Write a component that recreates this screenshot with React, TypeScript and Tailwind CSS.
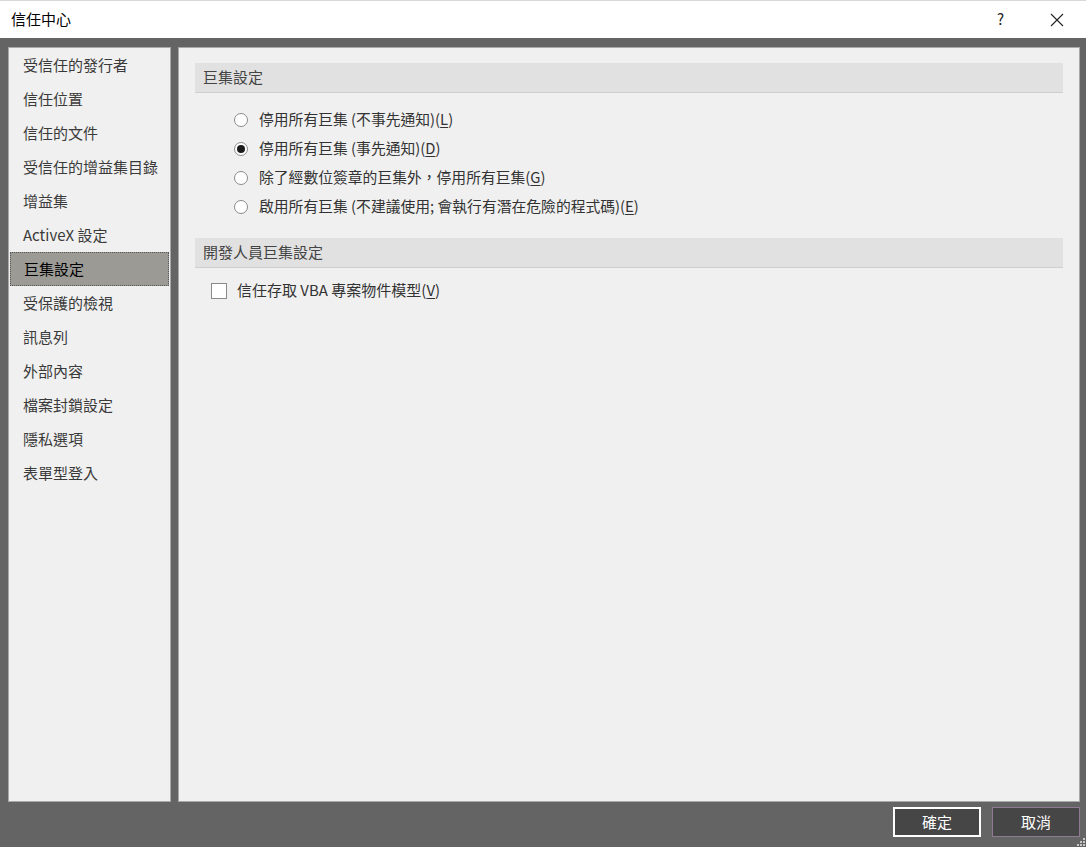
import React from "react";

const font = { fontFamily: '"Noto Sans CJK TC", "Noto Sans", sans-serif' };

const items = [
  "受信任的發行者",
  "信任位置",
  "信任的文件",
  "受信任的增益集目錄",
  "增益集",
  "ActiveX 設定",
  "巨集設定",
  "受保護的檢視",
  "訊息列",
  "外部內容",
  "檔案封鎖設定",
  "隱私選項",
  "表單型登入",
];

function Radio({ checked }: { checked?: boolean }) {
  return (
    <span className="w-[14px] h-[14px] rounded-full border border-[#8a8a8a] bg-white flex items-center justify-center shrink-0">
      {checked && <span className="w-[8px] h-[8px] rounded-full bg-[#1a1a1a]" />}
    </span>
  );
}

function U({ c }: { c: string }) {
  return <span className="underline underline-offset-2">{c}</span>;
}

export default function App() {
  const radios: React.ReactNode[] = [
    <>停用所有巨集 (不事先通知)(<U c="L" />)</>,
    <>停用所有巨集 (事先通知)(<U c="D" />)</>,
    <>除了經數位簽章的巨集外，停用所有巨集(<U c="G" />)</>,
    <>啟用所有巨集 (不建議使用; 會執行有潛在危險的程式碼)(<U c="E" />)</>,
  ];
  return (
    <div className="w-[1086px] h-[847px] bg-[#646464] flex flex-col overflow-hidden relative" style={font}>
      {/* title bar */}
      <div className="h-[38px] bg-white flex items-center shrink-0 border-t border-[#d8d8d8]">
        <span className="ml-[11px] text-[15px] text-black">信任中心</span>
        <span className="ml-auto text-[15px] text-[#222] mr-[46px]">?</span>
        <svg width="14" height="14" viewBox="0 0 14 14" className="mr-[22px]">
          <path d="M1 1 L13 13 M13 1 L1 13" stroke="#222" strokeWidth="1.1" />
        </svg>
      </div>
      {/* body */}
      <div className="flex pt-[9px] h-[764px] shrink-0">
        <div className="ml-[8px] w-[163px] h-[755px] bg-[#f0f0f0] border border-[#a8a8a8] px-[1px]">
          {items.map((t, i) => (
            <div
              key={t}
              className={
                "h-[34px] flex items-center pl-[13px] text-[15px] " +
                (i === 6
                  ? "bg-[#9b9a95] text-black border border-dotted border-[#555]"
                  : "text-[#3a3a3a]")
              }
            >
              {t}
            </div>
          ))}
        </div>
        <div className="ml-[7px] w-[902px] h-[755px] bg-[#f0f0f0] border border-[#a8a8a8] px-[16px] pt-[15px]">
          <div className="h-[30px] bg-[#e1e1e1] border-b border-[#cfcfcf] flex items-center pl-[8px] text-[15px] text-[#444]">
            巨集設定
          </div>
          <div className="pl-[39px] pt-[12px] flex flex-col">
            {radios.map((r, i) => (
              <div key={i} className="h-[29px] flex items-center text-[14.8px] text-[#333]">
                <Radio checked={i === 1} />
                <span className="ml-[11px]">{r}</span>
              </div>
            ))}
          </div>
          <div className="mt-[17px] h-[30px] bg-[#e1e1e1] border-b border-[#cfcfcf] flex items-center pl-[8px] text-[15px] text-[#444]">
            開發人員巨集設定
          </div>
          <div className="pl-[16px] pt-[13px] flex items-center h-[32px] text-[15px] text-[#333]">
            <span className="w-[16px] h-[16px] border border-[#8a8a8a] bg-white shrink-0" />
            <span className="ml-[10px]">
              信任存取 VBA 專案物件模型(<U c="V" />)
            </span>
          </div>
        </div>
      </div>
      {/* footer */}
      <div className="flex justify-end pt-[5px] pr-[6px] gap-[11px]">
        <button className="w-[88px] h-[30px] bg-[#464646] border-2 border-white text-white text-[15px]">確定</button>
        <button className="w-[88px] h-[30px] bg-[#464646] border border-[#8e7b93] text-white text-[15px]">取消</button>
      </div>
      <svg width="8" height="8" viewBox="0 0 8 8" className="absolute right-[1px] bottom-[1px]">
        {[[6, 0], [3, 3], [6, 3], [0, 6], [3, 6], [6, 6]].map(([x, y], i) => (
          <rect key={i} x={x} y={y} width="2" height="2" fill="#c8c8c8" />
        ))}
      </svg>
    </div>
  );
}
